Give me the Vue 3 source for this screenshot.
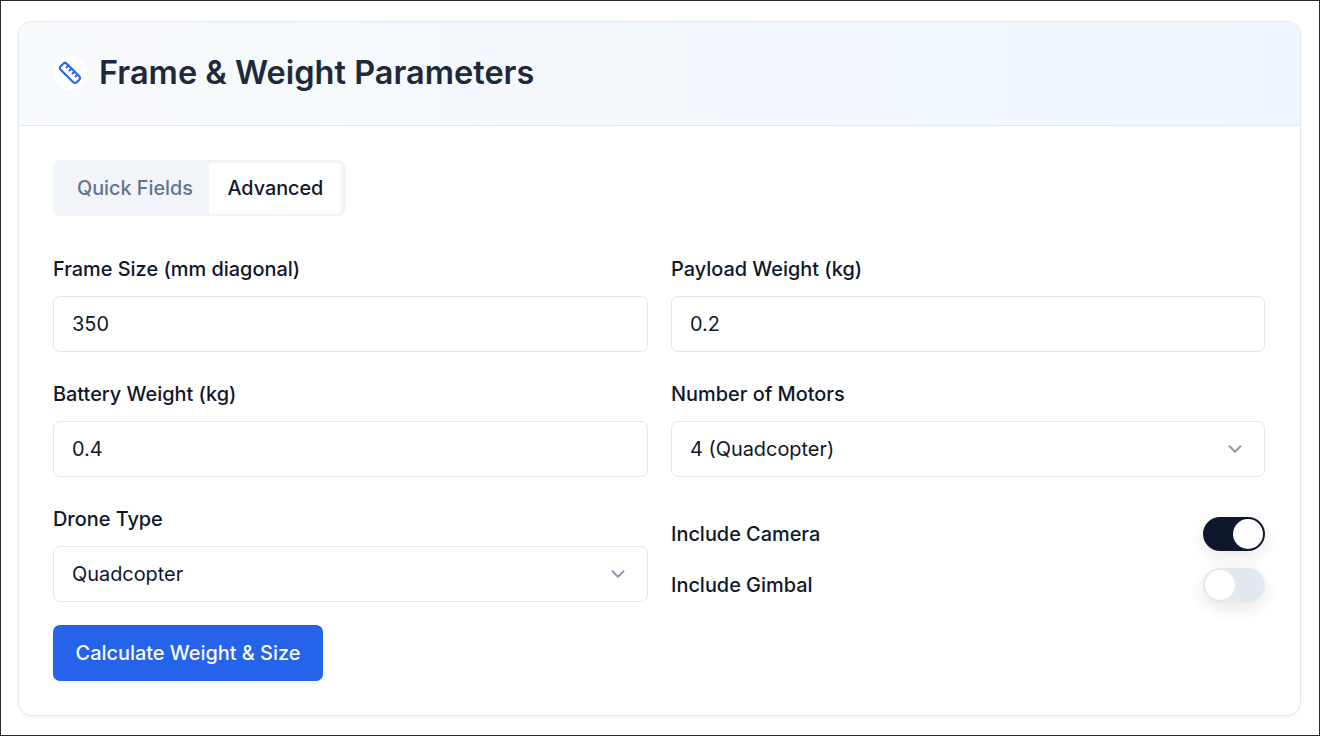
<template>
  <div class="page">
    <section class="card">
      <header class="card-header">
        <span class="icon-badge">
          <svg width="24" height="24" viewBox="0 0 24 24" fill="none" stroke="#2563eb" stroke-width="2" stroke-linecap="round" stroke-linejoin="round">
            <path d="M21.3 15.3a2.4 2.4 0 0 1 0 3.4l-2.6 2.6a2.4 2.4 0 0 1-3.4 0L2.7 8.7a2.41 2.41 0 0 1 0-3.4l2.6-2.6a2.41 2.41 0 0 1 3.4 0Z"></path>
            <path d="m14.5 12.5 2-2"></path>
            <path d="m11.5 9.5 2-2"></path>
            <path d="m8.5 6.5 2-2"></path>
            <path d="m17.5 15.5 2-2"></path>
          </svg>
        </span>
        <h1 class="title">Frame &amp; Weight Parameters</h1>
      </header>

      <div class="card-body">
        <div class="tabs">
          <button
            v-for="tab in tabs"
            :key="tab"
            class="tab"
            :class="{ active: tab === activeTab }"
            @click="activeTab = tab"
          >{{ tab }}</button>
        </div>

        <div class="form-grid">
          <div class="field">
            <label class="label">Frame Size (mm diagonal)</label>
            <div class="control">350</div>
          </div>
          <div class="field">
            <label class="label">Payload Weight (kg)</label>
            <div class="control">0.2</div>
          </div>
          <div class="field">
            <label class="label">Battery Weight (kg)</label>
            <div class="control">0.4</div>
          </div>
          <div class="field">
            <label class="label">Number of Motors</label>
            <div class="control select">
              4 (Quadcopter)
              <svg class="chevron" width="22" height="22" viewBox="0 0 24 24" fill="none" stroke="currentColor" stroke-width="2" stroke-linecap="round" stroke-linejoin="round">
                <path d="m6 9 6 6 6-6"></path>
              </svg>
            </div>
          </div>
          <div class="field">
            <label class="label">Drone Type</label>
            <div class="control select">
              Quadcopter
              <svg class="chevron" width="22" height="22" viewBox="0 0 24 24" fill="none" stroke="currentColor" stroke-width="2" stroke-linecap="round" stroke-linejoin="round">
                <path d="m6 9 6 6 6-6"></path>
              </svg>
            </div>
          </div>
          <div class="switches">
            <div class="switch-row">
              <span class="label">Include Camera</span>
              <button class="switch" :class="{ on: camera }" @click="camera = !camera"><span class="thumb"></span></button>
            </div>
            <div class="switch-row">
              <span class="label">Include Gimbal</span>
              <button class="switch" :class="{ on: gimbal }" @click="gimbal = !gimbal"><span class="thumb"></span></button>
            </div>
          </div>
        </div>

        <button class="submit">Calculate Weight &amp; Size</button>
      </div>
    </section>
  </div>
</template>

<script setup>
import { ref } from 'vue'

const tabs = ['Quick Fields', 'Advanced']
const activeTab = ref('Advanced')
const camera = ref(true)
const gimbal = ref(false)
</script>

<style>
html, body {
  margin: 0;
  background: #fff;
}
</style>

<style scoped>
.page {
  box-sizing: border-box;
  width: 1320px;
  height: 736px;
  padding: 20px 18px 19px 17px;
  border: 1px solid #2b2b2b;
  font-family: Inter, "Liberation Sans", sans-serif;
  color: #0f172a;
}

.card {
  box-sizing: border-box;
  height: 695px;
  border: 1.5px solid #e2e8f0;
  border-radius: 14px;
  background: #fff;
  overflow: hidden;
  box-shadow: 0 1px 3px rgba(15, 23, 42, 0.06);
}

.card-header {
  display: flex;
  align-items: center;
  gap: 12px;
  height: 103.5px;
  box-sizing: border-box;
  padding: 0 34px;
  border-bottom: 1.5px solid #e2e8f0;
  background: linear-gradient(90deg, #f8fafc, #eff6ff);
}

.icon-badge {
  display: flex;
  align-items: center;
  justify-content: center;
  width: 34px;
  height: 34px;
  border-radius: 50%;
  background: #fff;
}

.title {
  margin: 0 0 2px;
  font-size: 32.5px;
  font-weight: 600;
  color: #1e293b;
}

.card-body {
  padding: 34.5px 34px 0;
}

.tabs {
  display: inline-flex;
  padding: 2.5px 5px 2.5px 6.5px;
  border-radius: 8px;
  background: #f1f5f9;
}

.tab {
  height: 51px;
  padding: 0 16.5px 0 17.5px;
  border: none;
  border-radius: 3px;
  background: transparent;
  font: 500 19.8px Inter, "Liberation Sans", sans-serif;
  color: #64748b;
}

.tab.active {
  padding: 0 18px;
  background: #fff;
  color: #0f172a;
}

.form-grid {
  display: grid;
  grid-template-columns: 595px 594px;
  column-gap: 23px;
  row-gap: 26px;
  margin-top: 37px;
}

.field {
  display: flex;
  flex-direction: column;
  gap: 11px;
}

.label {
  font-size: 19.9px;
  font-weight: 500;
  line-height: 32px;
  height: 32px;
  color: #0f172a;
}

.control {
  box-sizing: border-box;
  display: flex;
  align-items: center;
  justify-content: space-between;
  height: 56px;
  padding: 0 18px;
  border: 1.5px solid #e2e8f0;
  border-radius: 7px;
  background: #fff;
  font-size: 19.9px;
  color: #0f172a;
}

.chevron {
  color: #64748b;
  opacity: 0.75;
}

.switches {
  display: flex;
  flex-direction: column;
  justify-content: flex-end;
  gap: 17px;
}

.switch-row {
  display: flex;
  align-items: center;
  justify-content: space-between;
  height: 34px;
}

.switch {
  position: relative;
  box-sizing: border-box;
  width: 62px;
  height: 34px;
  padding: 0;
  border: 2px solid transparent;
  border-radius: 17px;
  background: #e2e8f0;
  box-shadow: 0 6px 16px rgba(15, 23, 42, 0.1);
}

.switch.on {
  background: #0f172a;
}

.thumb {
  position: absolute;
  top: 0;
  left: 0;
  width: 30px;
  height: 30px;
  border-radius: 50%;
  background: #fff;
}

.switch.on .thumb {
  left: 28px;
}

.submit {
  display: block;
  width: 270px;
  height: 56px;
  margin-top: 23px;
  border: none;
  border-radius: 7px;
  background: #2563eb;
  font: 500 19.9px Inter, "Liberation Sans", sans-serif;
  color: #f8fafc;
}
</style>
